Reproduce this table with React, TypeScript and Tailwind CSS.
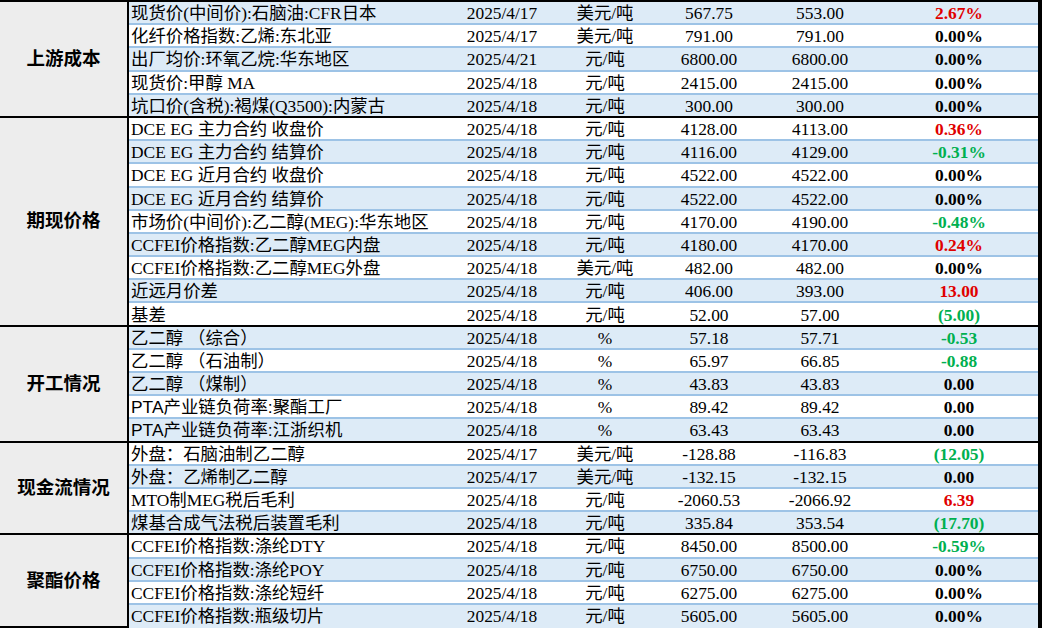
import React from "react";

type Tone = "red" | "green" | "black";

interface Row {
  name: string;
  date: string;
  unit: string;
  v1: string;
  v2: string;
  chg: string;
  tone: Tone;
  sans?: boolean;
}

interface Section {
  title: string;
  rows: Row[];
}

const sections: Section[] = [
  {
    title: "上游成本",
    rows: [
      { name: "现货价(中间价):石脑油:CFR日本", date: "2025/4/17", unit: "美元/吨", v1: "567.75", v2: "553.00", chg: "2.67%", tone: "red" },
      { name: "化纤价格指数:乙烯:东北亚", date: "2025/4/17", unit: "美元/吨", v1: "791.00", v2: "791.00", chg: "0.00%", tone: "black" },
      { name: "出厂均价:环氧乙烷:华东地区", date: "2025/4/21", unit: "元/吨", v1: "6800.00", v2: "6800.00", chg: "0.00%", tone: "black" },
      { name: "现货价:甲醇 MA", date: "2025/4/18", unit: "元/吨", v1: "2415.00", v2: "2415.00", chg: "0.00%", tone: "black" },
      { name: "坑口价(含税):褐煤(Q3500):内蒙古", date: "2025/4/18", unit: "元/吨", v1: "300.00", v2: "300.00", chg: "0.00%", tone: "black" },
    ],
  },
  {
    title: "期现价格",
    rows: [
      { name: "DCE EG 主力合约 收盘价", date: "2025/4/18", unit: "元/吨", v1: "4128.00", v2: "4113.00", chg: "0.36%", tone: "red" },
      { name: "DCE EG 主力合约 结算价", date: "2025/4/18", unit: "元/吨", v1: "4116.00", v2: "4129.00", chg: "-0.31%", tone: "green" },
      { name: "DCE EG 近月合约 收盘价", date: "2025/4/18", unit: "元/吨", v1: "4522.00", v2: "4522.00", chg: "0.00%", tone: "black" },
      { name: "DCE EG 近月合约 结算价", date: "2025/4/18", unit: "元/吨", v1: "4522.00", v2: "4522.00", chg: "0.00%", tone: "black" },
      { name: "市场价(中间价):乙二醇(MEG):华东地区", date: "2025/4/18", unit: "元/吨", v1: "4170.00", v2: "4190.00", chg: "-0.48%", tone: "green" },
      { name: "CCFEI价格指数:乙二醇MEG内盘", date: "2025/4/18", unit: "元/吨", v1: "4180.00", v2: "4170.00", chg: "0.24%", tone: "red" },
      { name: "CCFEI价格指数:乙二醇MEG外盘", date: "2025/4/18", unit: "美元/吨", v1: "482.00", v2: "482.00", chg: "0.00%", tone: "black" },
      { name: "近远月价差", date: "2025/4/18", unit: "元/吨", v1: "406.00", v2: "393.00", chg: "13.00", tone: "red" },
      { name: "基差", date: "2025/4/18", unit: "元/吨", v1: "52.00", v2: "57.00", chg: "(5.00)", tone: "green" },
    ],
  },
  {
    title: "开工情况",
    rows: [
      { name: "乙二醇 （综合）", date: "2025/4/18", unit: "%", v1: "57.18", v2: "57.71", chg: "-0.53", tone: "green", sans: true },
      { name: "乙二醇 （石油制）", date: "2025/4/18", unit: "%", v1: "65.97", v2: "66.85", chg: "-0.88", tone: "green", sans: true },
      { name: "乙二醇 （煤制）", date: "2025/4/18", unit: "%", v1: "43.83", v2: "43.83", chg: "0.00", tone: "black", sans: true },
      { name: "PTA产业链负荷率:聚酯工厂", date: "2025/4/18", unit: "%", v1: "89.42", v2: "89.42", chg: "0.00", tone: "black", sans: true },
      { name: "PTA产业链负荷率:江浙织机", date: "2025/4/18", unit: "%", v1: "63.43", v2: "63.43", chg: "0.00", tone: "black", sans: true },
    ],
  },
  {
    title: "现金流情况",
    rows: [
      { name: "外盘：石脑油制乙二醇", date: "2025/4/17", unit: "美元/吨", v1: "-128.88", v2: "-116.83", chg: "(12.05)", tone: "green", sans: true },
      { name: "外盘：乙烯制乙二醇", date: "2025/4/17", unit: "美元/吨", v1: "-132.15", v2: "-132.15", chg: "0.00", tone: "black", sans: true },
      { name: "MTO制MEG税后毛利", date: "2025/4/18", unit: "元/吨", v1: "-2060.53", v2: "-2066.92", chg: "6.39", tone: "red" },
      { name: "煤基合成气法税后装置毛利", date: "2025/4/18", unit: "元/吨", v1: "335.84", v2: "353.54", chg: "(17.70)", tone: "green", sans: true },
    ],
  },
  {
    title: "聚酯价格",
    rows: [
      { name: "CCFEI价格指数:涤纶DTY", date: "2025/4/18", unit: "元/吨", v1: "8450.00", v2: "8500.00", chg: "-0.59%", tone: "green" },
      { name: "CCFEI价格指数:涤纶POY", date: "2025/4/18", unit: "元/吨", v1: "6750.00", v2: "6750.00", chg: "0.00%", tone: "black" },
      { name: "CCFEI价格指数:涤纶短纤", date: "2025/4/18", unit: "元/吨", v1: "6275.00", v2: "6275.00", chg: "0.00%", tone: "black" },
      { name: "CCFEI价格指数:瓶级切片", date: "2025/4/18", unit: "元/吨", v1: "5605.00", v2: "5605.00", chg: "0.00%", tone: "black" },
    ],
  },
];

const toneClass: Record<Tone, string> = {
  red: "text-[#e00000]",
  green: "text-[#00b050]",
  black: "text-black",
};

const serif = "font-['Liberation_Serif','Noto_Sans_CJK_SC',serif]";
const sans = "font-['Liberation_Sans','Noto_Sans_CJK_SC',sans-serif]";

export default function App() {
  let idx = 0;
  return (
    <div className="w-[1050px] h-[640px] bg-white overflow-hidden">
      <div className="w-[1042px] border-t-2 border-r-4 border-black">
        {sections.map((sec, si) => (
          <div key={sec.title} className="flex">
            <div
              className={`w-[129px] shrink-0 bg-[#ededed] border-r-2 border-b-2 border-black flex items-center justify-center text-[18.5px] font-bold text-black ${sans}`}
            >
              {sec.title}
            </div>
            <div className="flex-1 flex flex-col">
              {sec.rows.map((r, ri) => {
                const blue = idx % 2 === 0;
                idx++;
                const last = ri === sec.rows.length - 1;
                const border = last
                  ? si === sections.length - 1
                    ? "border-transparent"
                    : "border-black"
                  : "border-[#9dc3e6]";
                return (
                  <div
                    key={r.name}
                    className={`h-[23.2px] pt-[2px] flex items-center border-b-2 ${border} ${
                      blue ? "bg-[#ddebf7]" : "bg-white"
                    } text-[17.4px] leading-[21px] text-black ${serif}`}
                  >
                    <div className={`w-[311px] pl-[2px] whitespace-nowrap ${r.sans ? sans : ""}`}>{r.name}</div>
                    <div className="w-[124px] text-center">{r.date}</div>
                    <div className="w-[82px] text-center">{r.unit}</div>
                    <div className="w-[126px] text-center">{r.v1}</div>
                    <div className="w-[96px] text-center">{r.v2}</div>
                    <div className={`flex-1 pl-[12px] text-center font-bold ${toneClass[r.tone]}`}>{r.chg}</div>
                  </div>
                );
              })}
            </div>
          </div>
        ))}
      </div>
    </div>
  );
}
